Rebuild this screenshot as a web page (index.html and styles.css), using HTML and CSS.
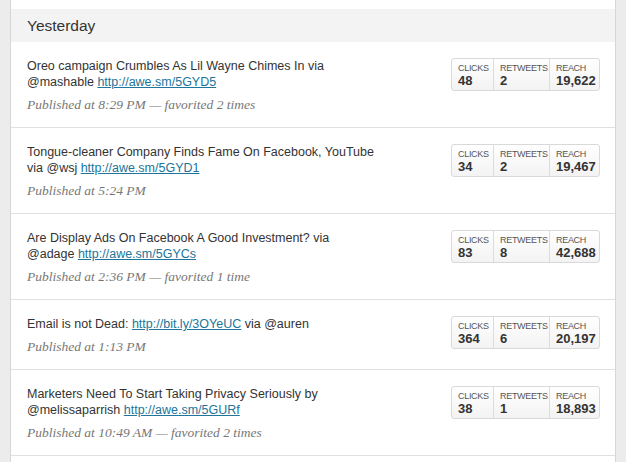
FILE: index.html
```html
<!DOCTYPE html>
<html lang="en">
<head>
<meta charset="utf-8">
<title>Yesterday</title>
<link rel="stylesheet" href="styles.css">
</head>
<body>
<div class="page">
  <div class="panel">
    <h2 class="day">Yesterday</h2>
    <ul class="posts">
      <li class="post">
        <div class="post-body">
          <p class="post-text">Oreo campaign Crumbles As Lil Wayne Chimes In via @mashable <a href="#">http://awe.sm/5GYD5</a></p>
          <p class="post-meta">Published at 8:29 PM — favorited 2 times</p>
        </div>
        <div class="stats">
          <div class="stat"><span class="stat-label">Clicks</span><span class="stat-value">48</span></div>
          <div class="stat"><span class="stat-label">Retweets</span><span class="stat-value">2</span></div>
          <div class="stat"><span class="stat-label">Reach</span><span class="stat-value">19,622</span></div>
        </div>
      </li>
      <li class="post">
        <div class="post-body">
          <p class="post-text">Tongue-cleaner Company Finds Fame On Facebook, YouTube via @wsj <a href="#">http://awe.sm/5GYD1</a></p>
          <p class="post-meta">Published at 5:24 PM</p>
        </div>
        <div class="stats">
          <div class="stat"><span class="stat-label">Clicks</span><span class="stat-value">34</span></div>
          <div class="stat"><span class="stat-label">Retweets</span><span class="stat-value">2</span></div>
          <div class="stat"><span class="stat-label">Reach</span><span class="stat-value">19,467</span></div>
        </div>
      </li>
      <li class="post">
        <div class="post-body">
          <p class="post-text">Are Display Ads On Facebook A Good Investment? via @adage <a href="#">http://awe.sm/5GYCs</a></p>
          <p class="post-meta">Published at 2:36 PM — favorited 1 time</p>
        </div>
        <div class="stats">
          <div class="stat"><span class="stat-label">Clicks</span><span class="stat-value">83</span></div>
          <div class="stat"><span class="stat-label">Retweets</span><span class="stat-value">8</span></div>
          <div class="stat"><span class="stat-label">Reach</span><span class="stat-value">42,688</span></div>
        </div>
      </li>
      <li class="post">
        <div class="post-body">
          <p class="post-text">Email is not Dead: <a href="#">http://bit.ly/3OYeUC</a> via @auren</p>
          <p class="post-meta">Published at 1:13 PM</p>
        </div>
        <div class="stats">
          <div class="stat"><span class="stat-label">Clicks</span><span class="stat-value">364</span></div>
          <div class="stat"><span class="stat-label">Retweets</span><span class="stat-value">6</span></div>
          <div class="stat"><span class="stat-label">Reach</span><span class="stat-value">20,197</span></div>
        </div>
      </li>
      <li class="post">
        <div class="post-body">
          <p class="post-text">Marketers Need To Start Taking Privacy Seriously by @melissaparrish <a href="#">http://awe.sm/5GURf</a></p>
          <p class="post-meta">Published at 10:49 AM — favorited 2 times</p>
        </div>
        <div class="stats">
          <div class="stat"><span class="stat-label">Clicks</span><span class="stat-value">38</span></div>
          <div class="stat"><span class="stat-label">Retweets</span><span class="stat-value">1</span></div>
          <div class="stat"><span class="stat-label">Reach</span><span class="stat-value">18,893</span></div>
        </div>
      </li>
    </ul>
  </div>
</div>
</body>
</html>
```

FILE: styles.css
```css
html, body {
  margin: 0;
  padding: 0;
}

body {
  background: #ececec;
  font-family: "Liberation Sans", Arial, Helvetica, sans-serif;
  color: #333;
}

.page {
  padding: 0 10px;
  height: 100vh;
  box-sizing: border-box;
}

.panel {
  background: #fff;
  border-left: 1px solid #d6d6d6;
  border-right: 1px solid #d6d6d6;
  padding-top: 9px;
  height: 100%;
  box-sizing: border-box;
  overflow: hidden;
}

.day {
  margin: 0;
  height: 33px;
  padding-left: 16px;
  background: #f3f3f3;
  font-size: 15.5px;
  line-height: 33px;
  font-weight: normal;
  color: #333;
}

.posts {
  list-style: none;
  margin: 0;
  padding: 0;
}

.post {
  display: flex;
  justify-content: space-between;
  align-items: flex-start;
  padding: 16px 15px 13px 16px;
  border-bottom: 1px solid #e0e0e0;
}

.post-body {
  width: 348px;
}

.post-text {
  margin: 0;
  font-size: 12.5px;
  line-height: 16px;
  color: #333;
}

.post-text a {
  color: #21759b;
  text-decoration: underline;
}

.post-meta {
  margin: 6px 0 0;
  font-family: "Liberation Serif", Georgia, serif;
  font-style: italic;
  font-size: 13.5px;
  line-height: 18px;
  color: #777;
}

.stats {
  display: flex;
  border: 1px solid #d9d9d9;
  border-radius: 3px;
  background: linear-gradient(#ffffff, #f3f3f3);
}

.stat {
  display: flex;
  flex-direction: column;
  padding: 4px 6px 1px;
  box-sizing: border-box;
}

.stat:nth-child(1) {
  width: 41px;
}

.stat:nth-child(2) {
  width: 56px;
  border-left: 1px solid #dcdcdc;
}

.stat:nth-child(3) {
  width: 50px;
  border-left: 1px solid #dcdcdc;
}

.stat-label {
  font-size: 9px;
  line-height: 10px;
  letter-spacing: -0.3px;
  text-transform: uppercase;
  color: #555;
  white-space: nowrap;
}

.stat-value {
  font-size: 13px;
  line-height: 16px;
  font-weight: bold;
  color: #333;
  white-space: nowrap;
}
```
